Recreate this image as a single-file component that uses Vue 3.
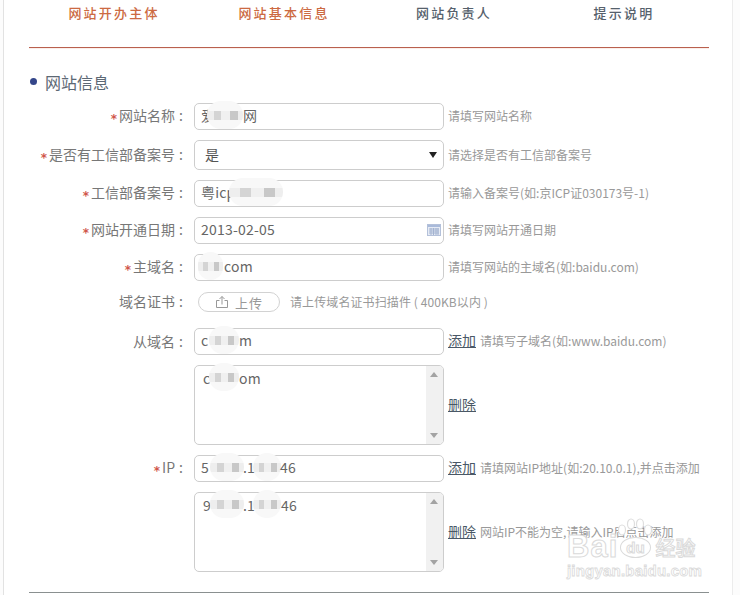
<script setup>
const tabs = [
  { text: '网站开办主体', on: true },
  { text: '网站基本信息', on: true },
  { text: '网站负责人', on: false },
  { text: '提示说明', on: false }
]
</script>

<template>
  <div class="page">
    <div class="panel">
      <nav class="tabs">
        <span v-for="t in tabs" :key="t.text" class="tab" :class="{ on: t.on }">{{ t.text }}</span>
      </nav>
      <h2 class="section"><i class="dot"></i>网站信息</h2>

      <div class="row r3">
        <label class="lab"><em>*</em>网站名称<b>:</b></label>
        <div class="field"><span class="val">爱</span><i class="smudge m-name"></i><span class="val tail t-name">网</span></div>
        <span class="hint">请填写网站名称</span>
      </div>
      <div class="row r3">
        <label class="lab"><em>*</em>是否有工信部备案号<b>:</b></label>
        <div class="field select"><span class="val sel">是</span><i class="caret"></i></div>
        <span class="hint">请选择是否有工信部备案号</span>
      </div>
      <div class="row r3">
        <label class="lab"><em>*</em>工信部备案号<b>:</b></label>
        <div class="field"><span class="val">粤icp</span><i class="smudge m-icp"></i></div>
        <span class="hint">请输入备案号(如:京ICP证030173号-1)</span>
      </div>
      <div class="row r3">
        <label class="lab"><em>*</em>网站开通日期<b>:</b></label>
        <div class="field"><span class="val">2013-02-05</span>
          <svg class="cal" width="14" height="12" viewBox="0 0 14 12">
            <rect x="0.5" y="0.5" width="13" height="11" fill="#e6ebf5" stroke="#b4c1da"/>
            <rect x="1" y="1" width="12" height="2" fill="#a9bada"/>
            <path d="M2 5h10M2 7h10M2 9h10M4 4v7M6.500 4v7M9 4v7M11 4v7" stroke="#a3b3d0" stroke-width="1" fill="none"/>
          </svg>
        </div>
        <span class="hint">请填写网站开通日期</span>
      </div>
      <div class="row r3">
        <label class="lab"><em>*</em>主域名<b>:</b></label>
        <div class="field"><i class="smudge m-main"></i><span class="val tail t-main">com</span></div>
        <span class="hint">请填写网站的主域名(如:baidu.com)</span>
      </div>
      <div class="row r4">
        <label class="lab">域名证书<b>:</b></label>
        <button class="upload" type="button">
          <svg width="14" height="14" viewBox="0 0 14 14" fill="none" stroke="#999" stroke-width="1">
            <path d="M4.500 5.500H1.500V12.500H12.500V5.500H9.500"/>
            <path d="M7 9.500V1.500M4.500 4L7 1.500L9.500 4"/>
          </svg>
          上传
        </button>
        <span class="hint up-hint">请上传域名证书扫描件 ( 400KB以内 )</span>
      </div>
      <div class="row r3">
        <label class="lab">从域名<b>:</b></label>
        <div class="field"><span class="val">c</span><i class="smudge m-sub"></i><span class="val tail t-sub">m</span></div>
        <a class="act">添加</a>
        <span class="hint">请填写子域名(如:www.baidu.com)</span>
      </div>
      <div class="row r3">
        <div class="lab"></div>
        <div class="field area"><span class="val aval">c</span><i class="smudge m-sub"></i><span class="val aval tail t-sub">om</span><span class="bar"><i class="arrow-up"></i><i class="arrow-down"></i></span></div>
        <a class="act">删除</a>
      </div>
      <div class="row r3">
        <label class="lab"><em>*</em>IP<b>:</b></label>
        <div class="field"><span class="val">5</span><i class="smudge m-ip1"></i><span class="val tail t-ip1">.1</span><i class="smudge m-ip2"></i><span class="val tail t-ip2">46</span></div>
        <a class="act">添加</a>
        <span class="hint">请填网站IP地址(如:20.10.0.1),并点击添加</span>
      </div>
      <div class="row r8">
        <div class="lab"></div>
        <div class="field area"><span class="val aval">9</span><i class="smudge m-ip1"></i><span class="val aval tail t-ip1">.1</span><i class="smudge m-ip2"></i><span class="val aval tail t-ip3">46</span><span class="bar"><i class="arrow-up"></i><i class="arrow-down"></i></span></div>
        <a class="act">删除</a>
        <span class="hint">网站IP不能为空,请输入IP后点击添加</span>
      </div>
      <div class="foot-line"></div>
    </div>

    <div class="mark">
      <svg class="paw" width="36" height="19" viewBox="0 0 36 19" fill="#fff" stroke="#dedede" stroke-width="1.200">
        <ellipse cx="5" cy="12" rx="3.500" ry="5"/>
        <ellipse cx="14" cy="6" rx="3.500" ry="5"/>
        <ellipse cx="23" cy="6" rx="3.500" ry="5"/>
        <ellipse cx="31" cy="12" rx="3.500" ry="5"/>
      </svg>
      <div class="mark-top">Bai<span class="du">du</span><span class="jy">经验</span></div>
      <div class="mark-url">jingyan.baidu.com</div>
    </div>
  </div>
</template>

<style>
html, body { margin: 0; background: #fff; }
</style>

<style scoped>
.page {
  position: relative;
  width: 740px;
  height: 595px;
  overflow: hidden;
  background: #fcfcfc;
  font-family: "Noto Sans CJK SC", "Liberation Sans", sans-serif;
}
.panel {
  box-sizing: border-box;
  width: 730px;
  height: 595px;
  margin-left: 3px;
  padding: 0 23px 0 25px;
  background: #fff;
  border-left: 1px solid #e2e2e2;
  border-right: 1px solid #ececec;
}
.tabs {
  display: grid;
  grid-template-columns: repeat(4, 170px);
  height: 47px;
  border-bottom: 1px solid #b9604e;
  box-shadow: 0 1px 0 #fbeeea;
}
.tab {
  padding-top: 3px;
  text-align: center;
  font-size: 13px;
  line-height: 20px;
  letter-spacing: 2.200px;
  color: #56616c;
  font-weight: 500;
}
.tab.on { color: #cc6a42; }
.section {
  display: flex;
  align-items: center;
  margin: 22px 0 9px;
  height: 24px;
  font-size: 16px;
  font-weight: 400;
  color: #5c6874;
}
.dot {
  width: 7px;
  height: 7px;
  margin: 0 8px 1px 1px;
  border-radius: 50%;
  background: #34468a;
}
.row { display: flex; align-items: center; }
.r3 { margin-bottom: 10px; }
.r4 { margin: 11px 0 16px; height: 20px; }
.r8 { margin-bottom: 20px; }
.lab {
  box-sizing: border-box;
  width: 165px;
  flex: none;
  margin-top: -2px;
  padding-right: 7px;
  text-align: right;
  font-size: 14px;
  line-height: 20px;
  color: #777;
}
.lab em {
  margin-right: 2px;
  color: #d0564a;
  font: 700 12px "DejaVu Sans", sans-serif;
  vertical-align: -2px;
}
.lab b { display: inline-block; width: 12px; text-align: center; font-weight: 400; }
.field {
  position: relative;
  flex: none;
  box-sizing: border-box;
  width: 250px;
  height: 27px;
  border: 1px solid #cdcdcd;
  border-radius: 5px;
  background: #fff;
}
.select { height: 30px; }
.area { height: 80px; }
.val {
  position: absolute;
  left: 6px;
  top: 1px;
  font-size: 14px;
  line-height: 20px;
  letter-spacing: 0.200px;
  color: #666;
  white-space: nowrap;
}
.sel { left: 10px; top: 3px; color: #555; }
.aval { left: 8px; top: 2px; }
.tail { z-index: 1; }
.t-name { left: 48px; }
.t-main { left: 29px; }
.t-sub { left: 44px; }
.t-ip1 { left: 48px; }
.t-ip2 { left: 85px; }
.t-ip3 { left: 86px; }
.smudge {
  position: absolute;
  top: -3px;
  height: 28px;
  border-radius: 14px;
  background:
    linear-gradient(90deg, #eee 0 20%, #d4d4d4 20% 40%, #f0f0f0 40% 65%, #c8c8c8 65% 85%, #eee 85%) center / 100% 9px no-repeat,
    #f8f8f8;
}
.m-name { left: 12px; width: 36px; }
.m-icp { left: 34px; width: 54px; }
.m-main { left: 3px; width: 25px; }
.m-sub { left: 14px; width: 30px; }
.m-ip1 { left: 15px; width: 34px; }
.m-ip2 { left: 58px; width: 28px; }
.caret {
  position: absolute;
  right: 6px;
  top: 11px;
  border: 4px solid transparent;
  border-top: 6px solid #222;
  border-bottom: 0;
}
.cal { position: absolute; right: 2px; top: 6px; }
.bar {
  position: absolute;
  right: 0;
  top: 0;
  bottom: 0;
  width: 17px;
  background: #f1f1f1;
  border-radius: 0 4px 4px 0;
}
.arrow-up, .arrow-down {
  position: absolute;
  left: 4px;
  border: 4px solid transparent;
}
.arrow-up { top: 6px; border-bottom: 5px solid #a3a3a3; border-top: 0; }
.arrow-down { bottom: 6px; border-top: 5px solid #a3a3a3; border-bottom: 0; }
.hint {
  margin: -1px 0 0 4px;
  font-size: 12px;
  line-height: 18px;
  color: #999;
  white-space: nowrap;
}
.up-hint { margin-left: 10px; letter-spacing: 0.100px; }
.upload {
  display: flex;
  align-items: center;
  justify-content: center;
  gap: 6px;
  box-sizing: border-box;
  width: 82px;
  height: 20px;
  margin-left: 4px;
  padding: 0;
  border: 1px solid #d2d2d2;
  border-radius: 10px;
  background: #fff;
  font: 13px "Noto Sans CJK SC", sans-serif;
  letter-spacing: 1px;
  color: #999;
}
.act {
  margin: -3px 0 0 4px;
  font-size: 14px;
  line-height: 18px;
  color: #4a5866;
  text-decoration: underline;
  white-space: nowrap;
}
.foot-line { height: 1px; background: #8a9090; }
.mark {
  position: absolute;
  left: 567px;
  top: 518px;
  width: 135px;
  pointer-events: none;
  color: #fff;
}
.paw { position: absolute; left: 50px; top: 0; }
.mark-top {
  display: flex;
  align-items: center;
  margin-top: 16px;
  height: 26px;
  font: 700 31px/26px "Liberation Sans", sans-serif;
  letter-spacing: 1px;
  -webkit-text-stroke: 1px #dadada;
}
.du {
  margin: 0 5px 0 2px;
  padding: 1px 5px;
  font-size: 15px;
  line-height: 17px;
  letter-spacing: 0;
  border: 1px solid #dadada;
  border-radius: 50%;
  background: #fff;
}
.jy {
  font: 500 20px "Noto Sans CJK SC", sans-serif;
  letter-spacing: 0;
}
.mark-url {
  margin-top: 2px;
  font: 700 15px/18px "Liberation Sans", sans-serif;
  letter-spacing: 0.200px;
  white-space: nowrap;
  -webkit-text-stroke: 0.800px #dadada;
}
</style>
